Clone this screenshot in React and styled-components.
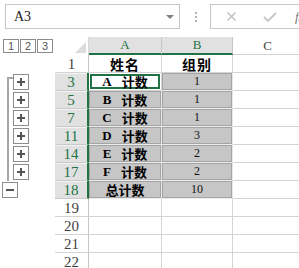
import React from 'react'
import styled, { createGlobalStyle } from 'styled-components'

const GREEN = '#217346'
const GRID = '#d4d4d4'

const GlobalStyle = createGlobalStyle`
  html, body { margin: 0; padding: 0; background: #fff; }
  body { width: 299px; height: 268px; overflow: hidden; }
`

const Page = styled.div`
  width: 299px;
  height: 268px;
  overflow: hidden;
  display: flex;
  flex-direction: column;
`

const FormulaBar = styled.div`
  height: 37px;
  flex: none;
  display: flex;
  align-items: flex-start;
  padding-top: 4px;
  box-sizing: border-box;
`

const NameBox = styled.div`
  margin-left: 5px;
  width: 175px;
  height: 25px;
  box-sizing: border-box;
  border: 1px solid #c6c6c6;
  display: flex;
  align-items: center;
  justify-content: space-between;
  padding: 0 5px 0 8px;
  font: 14px "Liberation Serif", serif;
  color: #222;
`

const Arrow = styled.span`
  width: 0;
  height: 0;
  border-left: 4px solid transparent;
  border-right: 4px solid transparent;
  border-top: 4px solid #808080;
`

const Dots = styled.div`
  margin: 0 13px 0 15px;
  height: 25px;
  display: flex;
  flex-direction: column;
  justify-content: center;
  gap: 2px;
  span {
    width: 2px;
    height: 2px;
    background: #b4b4b4;
  }
`

const FormulaBox = styled.div`
  flex: 1;
  min-width: 0;
  height: 25px;
  box-sizing: border-box;
  border: 1px solid #c6c6c6;
  border-right: none;
  display: flex;
  align-items: center;
  padding-left: 16px;
  gap: 27px;
  white-space: nowrap;
  overflow: hidden;
  svg {
    flex: none;
  }
`

const Fx = styled.span`
  flex: none;
  font: italic 13px "Liberation Serif", serif;
  color: #777;
  margin-left: -9px;
`

const Sheet = styled.div`
  display: flex;
  flex-direction: column;
`

const Row = styled.div`
  display: flex;
  flex: none;
  height: ${p => p.$h || 18}px;
`

const OutlineCell = styled.div`
  width: 55px;
  flex: none;
  display: flex;
  align-items: flex-start;
  box-sizing: border-box;
  padding-left: ${p => p.$pad ?? 7}px;
`

const Bracket = styled.div`
  width: 6px;
  align-self: stretch;
  box-sizing: border-box;
  border-left: 2px solid #a6a6a6;
  border-top: ${p => (p.$start ? '2px solid #a6a6a6' : 'none')};
  margin-top: ${p => (p.$start ? 4 : 0)}px;
`

const Levels = styled.div`
  display: flex;
  gap: 1px;
  padding: 2px 0 0 3px;
`

const Level = styled.div`
  width: 16px;
  height: 14px;
  box-sizing: border-box;
  border: 1px solid #8c8c8c;
  display: flex;
  align-items: center;
  justify-content: center;
  font: 11px "Liberation Sans", sans-serif;
  color: #555;
`

const ToggleBtn = styled.div`
  width: 16px;
  height: 16px;
  margin-top: 1px;
  box-sizing: border-box;
  border: 1px solid #8c8c8c;
  background: #fff;
  display: flex;
  align-items: center;
  justify-content: center;
`

const RowHead = styled.div`
  width: 34px;
  flex: none;
  box-sizing: border-box;
  display: flex;
  align-items: center;
  justify-content: center;
  padding-top: 1px;
  font: 15px "Liberation Serif", serif;
  color: ${p => (p.$sel ? GREEN : '#444')};
  background: ${p => (p.$sel ? '#e1e1e1' : '#fff')};
  border-right: ${p => (p.$sel ? `2px solid ${GREEN}` : '1px solid #c6c6c6')};
  border-bottom: 1px solid ${p => (p.$sel ? '#c9c9c9' : GRID)};
  box-shadow: ${p => (p.$sel ? 'inset 0 1px 0 #f3f3f3' : 'none')};
`

const Corner = styled.div`
  width: 34px;
  flex: none;
  box-sizing: border-box;
  display: flex;
  align-items: flex-end;
  justify-content: flex-end;
  padding: 0 2px 2px 0;
  border-right: 1px solid #d8d8d8;
  &::after {
    content: '';
    width: 0;
    height: 0;
    border-left: 11px solid transparent;
    border-bottom: 11px solid #dcdcdc;
  }
`

const ColHead = styled.div`
  width: ${p => p.$w}px;
  flex: none;
  box-sizing: border-box;
  display: flex;
  align-items: center;
  justify-content: center;
  font: 13px "Liberation Serif", serif;
  color: ${p => (p.$sel ? GREEN : '#444')};
  background: ${p => (p.$sel ? '#e1e1e1' : '#fff')};
  border-right: 1px solid #c6c6c6;
  border-bottom: ${p => (p.$sel ? `2px solid ${GREEN}` : `1px solid ${GRID}`)};
`

const Cell = styled.div`
  width: ${p => p.$w}px;
  flex: none;
  box-sizing: border-box;
  display: flex;
  align-items: center;
  justify-content: center;
  white-space: nowrap;
  background: ${p => (p.$fill ? '#c6c6c6' : '#fff')};
  border-right: 1px solid ${p => (p.$fill ? '#e6e6e6' : GRID)};
  border-bottom: 1px solid ${p => (p.$fill ? '#ececec' : GRID)};
  box-shadow: ${p =>
    p.$active
      ? `inset 0 0 0 1px #fff, inset 0 0 0 3px ${GREEN}`
      : p.$fill
      ? 'inset 0 0 0 1px #a4a4a4'
      : 'none'};
`

const Label = styled.span`
  display: flex;
  align-items: center;
  gap: 10px;
  font: bold 13px "Liberation Serif", "Noto Sans CJK SC", serif;
  color: #000;
`

const Title = styled.span`
  font: bold 14px "Noto Sans CJK SC", sans-serif;
  letter-spacing: 1px;
  color: #000;
`

const Num = styled.span`
  font: 12px "Liberation Serif", serif;
  color: #111;
`

const PlusIcon = () => (
  <svg width="10" height="10" viewBox="0 0 10 10">
    <path d="M1 5h8M5 1v8" stroke="#555" strokeWidth="2" />
  </svg>
)

const MinusIcon = () => (
  <svg width="10" height="10" viewBox="0 0 10 10">
    <path d="M1 5h8" stroke="#555" strokeWidth="2" />
  </svg>
)

const rows = [
  { n: '1', title: ['姓名', '组别'] },
  { n: '3', letter: 'A', b: '1', group: 'start', active: true },
  { n: '5', letter: 'B', b: '1', group: 'mid' },
  { n: '7', letter: 'C', b: '1', group: 'mid' },
  { n: '11', letter: 'D', b: '3', group: 'mid' },
  { n: '14', letter: 'E', b: '2', group: 'mid' },
  { n: '17', letter: 'F', b: '2', group: 'mid' },
  { n: '18', total: '总计数', b: '10', group: 'end' },
  { n: '19' },
  { n: '20' },
  { n: '21' },
  { n: '22' },
]

function Outline({ group }) {
  if (group === 'start' || group === 'mid') {
    return (
      <OutlineCell>
        <Bracket $start={group === 'start'} />
        <ToggleBtn>
          <PlusIcon />
        </ToggleBtn>
      </OutlineCell>
    )
  }
  if (group === 'end') {
    return (
      <OutlineCell $pad={2}>
        <ToggleBtn>
          <MinusIcon />
        </ToggleBtn>
      </OutlineCell>
    )
  }
  return <OutlineCell />
}

export default function App() {
  return (
    <Page>
      <GlobalStyle />
      <FormulaBar>
        <NameBox>
          A3
          <Arrow />
        </NameBox>
        <Dots>
          <span />
          <span />
          <span />
        </Dots>
        <FormulaBox>
          <svg width="9" height="9" viewBox="0 0 9 9">
            <path d="M0.5 0.5l8 8M8.5 0.5l-8 8" stroke="#bdbdbd" strokeWidth="1.3" />
          </svg>
          <svg width="14" height="10" viewBox="0 0 14 10">
            <path d="M1 5l4 4 8-8" stroke="#c4c4c4" strokeWidth="1.8" fill="none" />
          </svg>
          <Fx>fx</Fx>
        </FormulaBox>
      </FormulaBar>

      <Sheet>
        <Row>
          <OutlineCell $pad={0}>
            <Levels>
              <Level>1</Level>
              <Level>2</Level>
              <Level>3</Level>
            </Levels>
          </OutlineCell>
          <Corner />
          <ColHead $w={73} $sel>A</ColHead>
          <ColHead $w={71} $sel>B</ColHead>
          <ColHead $w={70}>C</ColHead>
        </Row>

        {rows.map(r => {
          const inRange = !!(r.letter || r.total)
          return (
            <Row key={r.n}>
              <Outline group={r.group} />
              <RowHead $sel={inRange}>{r.n}</RowHead>
              <Cell $w={73} $fill={inRange && !r.active} $active={r.active}>
                {r.title && <Title>{r.title[0]}</Title>}
                {r.letter && (
                  <Label>
                    <span>{r.letter}</span>
                    <span>计数</span>
                  </Label>
                )}
                {r.total && <Label>{r.total}</Label>}
              </Cell>
              <Cell $w={71} $fill={inRange}>
                {r.title && <Title>{r.title[1]}</Title>}
                {r.b && <Num>{r.b}</Num>}
              </Cell>
              <Cell $w={70} />
            </Row>
          )
        })}
      </Sheet>
    </Page>
  )
}
